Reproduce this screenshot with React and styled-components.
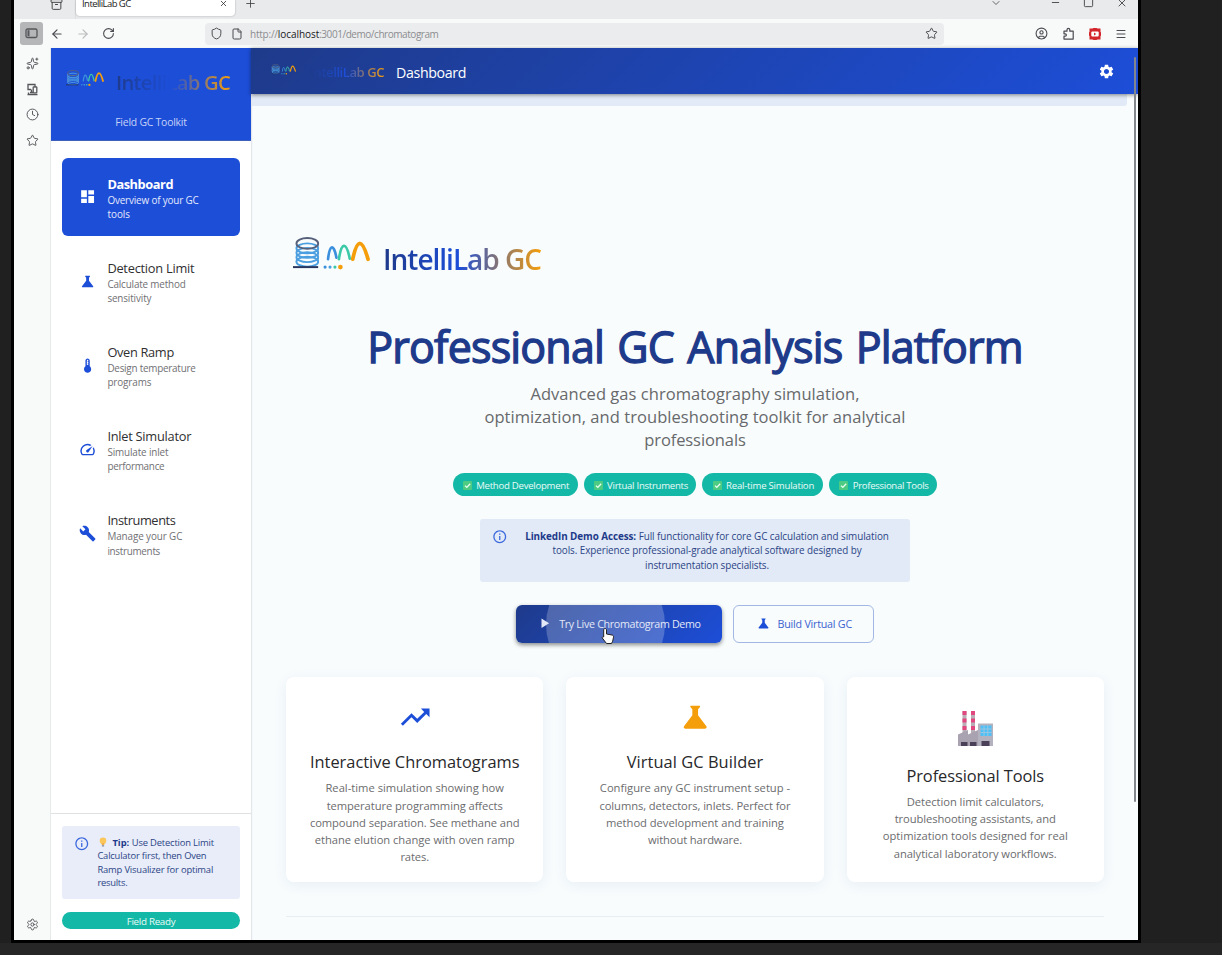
import React from "react";
import styled, { createGlobalStyle, css } from "styled-components";
import {
  MdDashboard, MdScience, MdThermostat, MdSpeed, MdBuild, MdTrendingUp,
  MdSettings, MdInfoOutline, MdPlayArrow,
} from "react-icons/md";
import {
  ArrowLeft, ArrowRight, RotateCw, Shield, File, Star, Plus, X, Minus, Square,
  ChevronDown, Menu, Clock, Settings, Sparkles, Archive, CircleUser,
} from "lucide-react";

const Global = createGlobalStyle`
  * { box-sizing: border-box; }
  html, body { margin: 0; background: #262626; }
  body { font-family: "Open Sans", "Noto Sans", sans-serif; overflow: hidden; }
  svg { display: block; flex: none; }
`;

/* ---- browser window ---- */
const Desktop = styled.div`
  width: 1222px; height: 955px; overflow: hidden; background: #262626;
`;
const Backdrop = styled.div`
  height: 943px; background: #202020; padding-left: 11px;
`;
const Frame = styled.div`
  width: 1130px; height: 943px; background: #000; padding: 0 3px 3px;
`;
const Window = styled.div`
  width: 1124px; height: 940px; overflow: hidden; background: #f8faf9;
  display: flex; flex-direction: column;
`;
const TabStrip = styled.div`
  height: 19px; flex: none; background: #e8eaeb; display: flex; align-items: flex-start;
  color: #444; padding-left: 36px;
`;
const TabTools = styled.div`
  width: 26px; height: 19px; border-right: 1px solid #dcdedf; overflow: hidden;
  & > svg { margin-top: -2px; }
`;
const Tab = styled.div`
  width: 159px; height: 16px; background: #fff; border-radius: 0 0 4px 4px;
  box-shadow: 0 0 2px rgba(0,0,0,.3); color: #222; font-size: 9.5px; line-height: 8px;
  display: flex; justify-content: space-between; padding: 0 7px 0 6px;
  & > svg { margin-top: -1px; }
`;
const NewTab = styled.div`margin: -3px 0 0 9px;`;
const WindowButtons = styled.div`
  margin-left: auto; display: flex; gap: 22px; padding-right: 10px; align-items: flex-start;
  & > svg { margin-top: -3px; }
  & > svg:first-child { margin-right: 26px; }
`;
const Toolbar = styled.div`
  height: 29px; flex: none; display: flex; align-items: center; color: #4a4a50; padding-left: 6px;
`;
const SideToggle = styled.div`
  width: 23px; height: 23px; border-radius: 3px; background: #b4b6b7;
  display: grid; place-items: center; margin-right: 7px;
`;
const NavIcons = styled.div`
  display: flex; gap: 12px; width: 155px;
  & > svg:nth-child(2) { color: #b9bbbd; }
`;
const UrlBar = styled.div`
  width: 739px; height: 22px; border-radius: 4px; background: #ebeced; display: flex; align-items: center;
  padding: 0 6px 0 5px; gap: 7.5px; font-size: 10px; color: #8b8c90;
  b { font-weight: 400; color: #18181b; }
  & > svg { color: #4a4a50; }
  & > svg:last-child { margin-left: auto; }
`;
const UrlText = styled.div`padding-top: 1px; white-space: nowrap;`;
const Extensions = styled.div`margin-left: auto; display: flex; gap: 14px; align-items: center; padding-right: 11px;`;

const Body = styled.div`flex: 1; display: flex; min-height: 0;`;
const Rail = styled.div`
  width: 37px; display: flex; flex-direction: column; align-items: center; gap: 12.6px;
  padding: 9px 0; color: #55565a; border-right: 1px solid #e6e9ea;
  & > svg:last-child { margin-top: auto; }
`;

/* ---- app drawer ---- */
const Drawer = styled.aside`
  width: 200px; flex: none; background: #fff; display: flex; flex-direction: column;
  box-shadow: 1px 0 1px #e3e7ea; z-index: 1;
`;
const DrawerHead = styled.div`
  height: 93px; background: #1d4ed8; border-bottom: 1px solid #3e60bb; text-align: center;
  padding: 20px 0 0 15px;
`;
const Toolkit = styled.div`
  font-size: 10.4px; line-height: 14px; color: #c6d3f7; margin: 9px 0 0 -15px;
`;
const Nav = styled.nav`padding: 17px 11px 0; display: flex; flex-direction: column; gap: 6.2px; flex: 1;`;
const NavItem = styled.div`
  height: 78px; border-radius: 6px; display: flex; align-items: center; padding-left: 17px; gap: 11.2px;
  color: ${(p) => (p.$active ? "#fff" : "#1d4ed8")};
  background: ${(p) => (p.$active ? "#1d4ed8" : "transparent")};
`;
const NavLabel = styled.div`padding-top: 1.6px;`;
const NavTitle = styled.div`
  font-size: 12.8px; line-height: 18px; color: ${(p) => (p.$active ? "#fff" : "#2f2f31")};
  font-weight: ${(p) => (p.$active ? 700 : 400)};
`;
const NavSub = styled.div`font-size: 9.9px; line-height: 14.2px; color: ${(p) => (p.$active ? "#e4eafb" : "#707073")};`;
const DrawerFoot = styled.div`border-top: 1px solid #dfe2e4; padding: 11.5px 11px 0; height: 127px;`;
const Tip = styled.div`
  height: 73.5px; background: #e8edf9; border-radius: 3px; padding: 10.5px 11.5px; display: flex; gap: 8.4px;
  font-size: 9.4px; line-height: 13.3px; color: #2c4486;
  b { color: #1e3a8a; }
`;
const InfoMark = styled.div`color: #3c68de;`;
const TipLine = styled.div`display: flex; align-items: center; gap: 2.5px; height: 13.3px;`;
const Ready = styled.div`
  height: 17.5px; border-radius: 9px; background: #14b8a6; margin-top: 12.5px; color: #e9fbf8;
  font-size: 9.8px; line-height: 19.5px; text-align: center;
`;

/* ---- app main area ---- */
const Main = styled.main`
  flex: 1; background: #f8fcfd; display: flex; flex-direction: column; min-width: 0; position: relative;
`;
const AppBar = styled.header`
  height: 46px; flex: none; background: linear-gradient(135deg, #1e3a8a 0%, #1d4ed8 100%);
  box-shadow: 0 1px 4px rgba(0,0,0,.45); display: flex; align-items: center; padding: 0 23px 0 20px; color: #fff;
  z-index: 1;
`;
const PageName = styled.div`font-size: 14.2px; margin-left: 12px; flex: 1; padding-top: 2px;`;
const Strip = styled.div`height: 12px; flex: none; margin-right: 11px; background: #e1eaf6; border-radius: 0 0 3px 0;`;
const Scrollbar = styled.div`
  position: absolute; right: 2px; top: 9px; width: 2px; height: 745px; background: #82868d;
  z-index: 2; border-radius: 1px;
`;
const Content = styled.div`padding: 131px 34px 0 35px; display: flex; flex-direction: column; align-items: center;`;
const HeroLogo = styled.div`align-self: flex-start; padding-left: 7px;`;

const LogoRow = styled.div`
  display: flex; align-items: flex-start; height: ${(p) => p.$h}px;
  & > svg { margin-top: ${(p) => p.$drop}px; }
`;
const LogoText = styled.div`
  font-weight: 600; white-space: nowrap; font-size: ${(p) => p.$size}px; line-height: 1.3;
  margin: ${(p) => p.$top}px 0 0 ${(p) => p.$gap}px;
  background: linear-gradient(90deg, #1e3a8a 0%, #1d4ed8 48%, #f59e0b 100%);
  -webkit-background-clip: text; background-clip: text; color: transparent;
`;
const Headline = styled.h1`
  margin: 44px 0 0; font-size: 43px; line-height: 60px; font-weight: 400; color: #1e3a8a; white-space: nowrap;
  word-spacing: 3px; -webkit-text-stroke: 1.3px #1e3a8a;
`;
const Lead = styled.div`margin-top: 5px; font-size: 16.5px; line-height: 23px; color: #67696b; text-align: center;`;
const Chips = styled.div`display: flex; gap: 6px; margin-top: 22px;`;
const Chip = styled.div`
  height: 23px; border-radius: 12px; width: ${(p) => p.$w}px; background: #14b8a6; color: #e9fbf8; font-size: 9.6px;
  display: flex; align-items: center; justify-content: center; gap: 4.5px; white-space: nowrap;
  padding: 1px 0 0 1.5px;
`;
const Notice = styled.div`
  width: 430px; height: 63px; margin-top: 22.5px; background: #e1eaf6; border-radius: 3px; display: flex;
  padding: 10px 12px; font-size: 9.9px; line-height: 14.6px; color: #2c4486; text-align: center;
  b { color: #1e3a8a; }
`;
const NoticeText = styled.div`flex: 1; padding-left: 8.5px; white-space: nowrap;`;
const Actions = styled.div`display: flex; gap: 11.5px; margin-top: 23px;`;
const Button = styled.div`
  height: 38px; width: ${(p) => p.$w}px; border-radius: 6px; font-size: 10.7px; display: flex; align-items: center;
  justify-content: center; position: relative; overflow: hidden; gap: 7px;
  ${(p) => p.$primary ? css`
    background: linear-gradient(135deg, #1e3a8a, #1d4ed8); color: #e3e8f7; padding-right: 1px;
  ` : css`
    border: 1px solid #a3b7e4; color: #3c63cf;
  `}
`;
const Lift = styled.div`border-radius: 6px; box-shadow: 0 2px 4px rgba(0,0,0,.45); position: relative;`;
const Ripple = styled.div`
  position: absolute; width: 119px; height: 119px; border-radius: 50%; left: 30px; top: -40px;
  background: rgba(255,255,255,.22);
`;
const Above = styled.div`position: relative; display: flex;`;
const Pointer = styled.svg`position: absolute; left: 85px; top: 22.5px;`;
const Cards = styled.div`
  display: grid; grid-template-columns: repeat(3, 257.4px); gap: 22.9px; margin-top: 34px; width: 818px;
`;
const Card = styled.div`
  height: 205px; background: #fff; border-radius: 8px; box-shadow: 0 3px 14px rgba(30,58,138,.07);
  display: flex; flex-direction: column; align-items: center; padding-top: 23px;
`;
const CardIcon = styled.div`color: ${(p) => p.$color}; padding-top: ${(p) => p.$drop || 0}px;`;
const CardTitle = styled.div`
  font-size: 16.4px; line-height: 24px; color: #28282a; margin: ${(p) => p.$gap}px 0 5.5px;
`;
const CardText = styled.div`font-size: 11.2px; line-height: 17.2px; color: #6b6c6e; text-align: center;`;
const Divider = styled.div`height: 1px; width: 818px; background: #e7eff3; margin-top: 34px;`;
const Row = styled.div`white-space: nowrap;`;
const Track = styled.span`white-space: nowrap; letter-spacing: ${(p) => p.$k}px;`;

const L = ({ s, k = 0 }) => <Track $k={k}>{s}</Track>;

/* ---- drawings ---- */
function Mark({ width }) {
  return (
    <svg width={width} height={width * 34 / 78} viewBox="0 0 78 34" fill="none">
      <g strokeWidth="1.9">
        <path d="M3.500 7v19M25.500 7v19" stroke="#7fa6cc" strokeWidth="1.1" />
        <ellipse cx="14.500" cy="25" rx="11" ry="5" stroke="#4b9fe0" />
        <ellipse cx="14.500" cy="20.500" rx="11" ry="5" stroke="#4b9fe0" />
        <ellipse cx="14.500" cy="16" rx="11" ry="5" stroke="#4b9fe0" />
        <ellipse cx="14.500" cy="11.500" rx="11" ry="5" stroke="#4b9fe0" />
        <ellipse cx="14.500" cy="6.500" rx="11" ry="5.500" stroke="#56607a" />
      </g>
      <path d="M0 30.500H25.500" stroke="#27375f" strokeWidth="2" />
      <path d="M35.500 22.500C37 8.500 41 5 44 21" stroke="#3b8fdc" strokeWidth="2.700" strokeLinecap="round" />
      <path d="M46.500 22.500C49 5 54 4 57.500 22" stroke="#3cc9a7" strokeWidth="2.700" strokeLinecap="round" />
      <path d="M60.500 22.500C65 1 70 1 76 22.500" stroke="#f59e0b" strokeWidth="3.800" strokeLinecap="round" />
      <circle cx="32.500" cy="30.500" r="1.600" fill="#3b8fdc" />
      <circle cx="37.500" cy="30.500" r="1.600" fill="#4b9fe0" />
      <circle cx="42.500" cy="30.500" r="1.600" fill="#3cc9a7" />
      <circle cx="48" cy="30.500" r="2.400" fill="#f59e0b" />
    </svg>
  );
}

function Logo({ mark, drop = 0, size, gap, top, h, k }) {
  return (
    <LogoRow $h={h} $drop={drop}>
      <Mark width={mark} />
      <LogoText $size={size} $gap={gap} $top={top}><L s="IntelliLab GC" k={k} /></LogoText>
    </LogoRow>
  );
}

const Check = () => (
  <svg width="9" height="9" viewBox="0 0 9 9">
    <rect width="9" height="9" rx="1" fill="#4ecb83" />
    <path d="M2 4.600l1.800 1.800L7.200 2.700" stroke="#e9fff2" strokeWidth="1.300" fill="none" />
  </svg>
);
const Bulb = () => (
  <svg width="12.500" height="11" viewBox="0 0 12.500 11">
    <circle cx="6" cy="3.800" r="3.300" fill="#fcc75a" />
    <path d="M4.500 6h3l-.4 2H4.900z" fill="#f0b04a" />
    <path d="M4.900 8h2.200v1.600H4.900z" fill="#9a9cab" />
  </svg>
);
const Factory = () => (
  <svg width="35" height="35" viewBox="0 0 35 35">
    <path d="M4.500 0h4v23h-4zM13 0h4v23h-4z" fill="#b9aeb6" />
    <path d="M4.500 0h4v4h-4zM4.500 7.500h4v4h-4zM4.500 15h4v4h-4zM13 0h4v4h-4zM13 7.500h4v4h-4zM13 15h4v4h-4z" fill="#e0487f" />
    <path d="M0 35V23.500L10 19v4.500L20 19v16z" fill="#a9a3b1" />
    <path d="M20 12.500h15V35H20z" fill="#b5b2bf" />
    <path d="M22.500 14.500h11v10.500h-11z" fill="#4fc0f5" />
    <path d="M26 14.500v10.500M29.800 14.500v10.500M22.500 18h11M22.500 21.500h11" stroke="#a9c7dc" strokeWidth=".8" />
    <path d="M3 31h6.500v4H3zM12 31h6.500v4H12zM23.500 30h8v5h-8z" fill="#4a4159" />
  </svg>
);
const SidePanel = () => (
  <svg width="13" height="11" viewBox="0 0 13 11">
    <rect x="1" y="1" width="11" height="8.500" rx="1.500" fill="none" stroke="#55565a" strokeWidth="1.300" />
    <path d="M2.500 2.200h2v6h-2z" fill="#55565a" />
  </svg>
);
const SyncedTabs = () => (
  <svg width="13" height="13" viewBox="0 0 13 13" fill="none" stroke="#55565a" strokeWidth="1.300">
    <path d="M5 6.500H2v-5h7v3" />
    <rect x="7.200" y="3.800" width="3.600" height="6" rx=".5" />
    <path d="M1.500 11.500h10M4 9.500h3M5.500 6.500v3M2.500 9.500v2" />
  </svg>
);
const Puzzle = () => (
  <svg width="13" height="13" viewBox="0 0 13 13" fill="none" stroke="#4a4a50" strokeWidth="1.200" strokeLinejoin="round">
    <path d="M2 4.200h3V2.700a1.400 1.400 0 0 1 2.800 0v1.500h3.400v7.900H2V9.200h1.200a1.200 1.200 0 0 0 0-2.400H2z" />
  </svg>
);
const RedShield = () => (
  <svg width="12" height="12" viewBox="0 0 12 12">
    <path d="M.5.500h3L4.500 0h3l1 .5h3v3.200l.5.8v3l-.5.800v3.200h-3l-1 .5h-3l-1-.5h-3V8.300L0 7.500v-3l.5-.8z" fill="#d3262c" />
    <rect x="2.300" y="3.500" width="7.400" height="5" rx="1" fill="#fff" />
    <path d="M5 4.500l2.200 1.500L5 7.500z" fill="#d3262c" />
  </svg>
);

/* ---- content; each text comes with its letter spacing ---- */
const nav = [
  { icon: MdDashboard, title: ["Dashboard", -0.44], sub: [["Overview of your GC", -0.15], ["tools", 0.02]], active: true },
  { icon: MdScience, title: ["Detection Limit", -0.24], sub: [["Calculate method", -0.16], ["sensitivity", -0.13]] },
  { icon: MdThermostat, title: ["Oven Ramp", -0.32], sub: [["Design temperature", -0.23], ["programs", -0.1]] },
  { icon: MdSpeed, title: ["Inlet Simulator", -0.25], sub: [["Simulate inlet", -0.13], ["performance", -0.26]] },
  { icon: MdBuild, title: ["Instruments", -0.43], sub: [["Manage your GC", -0.1], ["instruments", -0.29]] },
];
const chips = [
  ["Method Development", -0.26, 125.3],
  ["Virtual Instruments", -0.27, 112.5],
  ["Real-time Simulation", -0.22, 120.5],
  ["Professional Tools", -0.3, 108.7],
];
const cards = [
  {
    icon: <MdTrendingUp size={34.4} />, color: "#1d4ed8", gap: 16, title: ["Interactive Chromatograms", 0],
    text: [
      ["Real-time simulation showing how", 0], ["temperature programming affects", -0.07],
      ["compound separation. See methane and", -0.08], ["ethane elution change with oven ramp", -0.03],
      ["rates.", -0.14],
    ],
  },
  {
    icon: <MdScience size={34.4} />, color: "#f59e0b", gap: 16, title: ["Virtual GC Builder", 0.07],
    text: [
      ["Configure any GC instrument setup -", 0], ["columns, detectors, inlets. Perfect for", -0.08],
      ["method development and training", -0.03], ["without hardware.", -0.12],
    ],
  },
  {
    icon: <Factory />, drop: 11, gap: 18, title: ["Professional Tools", -0.08],
    text: [
      ["Detection limit calculators,", -0.04], ["troubleshooting assistants, and", -0.08],
      ["optimization tools designed for real", 0], ["analytical laboratory workflows.", -0.07],
    ],
  },
];

export default function App() {
  return (
    <Desktop>
      <Global />
      <Backdrop><Frame><Window>
        <TabStrip>
          <TabTools><Archive size={13} strokeWidth={1.8} /></TabTools>
          <Tab><L s="IntelliLab GC" k={-0.55} /><X size={9} /></Tab>
          <NewTab><Plus size={13} strokeWidth={1.6} /></NewTab>
          <WindowButtons>
            <ChevronDown size={12} strokeWidth={1.6} />
            <Minus size={11} />
            <Square size={11} />
            <X size={12} strokeWidth={1.8} />
          </WindowButtons>
        </TabStrip>
        <Toolbar>
          <SideToggle><SidePanel /></SideToggle>
          <NavIcons><ArrowLeft size={14} /><ArrowRight size={14} /><RotateCw size={13} /></NavIcons>
          <UrlBar>
            <Shield size={13} strokeWidth={1.8} /><File size={12} />
            <UrlText>
              <L s="http://" k={-0.22} /><b><L s="localhost" k={-0.06} /></b><L s=":3001/demo/chromatogram" k={-0.45} />
            </UrlText>
            <Star size={13} strokeWidth={1.8} />
          </UrlBar>
          <Extensions>
            <CircleUser size={13} /><Puzzle /><RedShield /><Menu size={12} />
          </Extensions>
        </Toolbar>
        <Body>
          <Rail>
            <Sparkles size={13} strokeWidth={1.8} /><SyncedTabs /><Clock size={13} strokeWidth={1.8} />
            <Star size={13} strokeWidth={1.8} /><Settings size={13} strokeWidth={1.8} />
          </Rail>
          <Drawer>
            <DrawerHead>
              <Logo mark={38} drop={2} size={20.2} gap={12} top={0.5} h={38} k={-0.72} />
              <Toolkit><L s="Field GC Toolkit" k={-0.21} /></Toolkit>
            </DrawerHead>
            <Nav>
              {nav.map((n) => (
                <NavItem key={n.title[0]} $active={n.active}>
                  <n.icon size={17.2} />
                  <NavLabel>
                    <NavTitle $active={n.active}><L s={n.title[0]} k={n.title[1]} /></NavTitle>
                    {n.sub.map(([s, k]) => <NavSub key={s} $active={n.active}><L s={s} k={k} /></NavSub>)}
                  </NavLabel>
                </NavItem>
              ))}
            </Nav>
            <DrawerFoot>
              <Tip>
                <InfoMark><MdInfoOutline size={15.5} /></InfoMark>
                <div>
                  <TipLine><Bulb /><b><L s="Tip:" k={0} /></b><L s="Use Detection Limit" k={-0.17} /></TipLine>
                  <TipLine><L s="Calculator first, then Oven" k={-0.19} /></TipLine>
                  <TipLine><L s="Ramp Visualizer for optimal" k={-0.17} /></TipLine>
                  <TipLine><L s="results." k={-0.24} /></TipLine>
                </div>
              </Tip>
              <Ready><L s="Field Ready" k={-0.3} /></Ready>
            </DrawerFoot>
          </Drawer>
          <Main>
            <AppBar>
              <Logo mark={25} drop={1.5} size={13} gap={14} top={1} h={17} k={-0.42} />
              <PageName><L s="Dashboard" k={-0.35} /></PageName>
              <MdSettings size={17} />
            </AppBar>
            <Strip />
            <Scrollbar />
            <Content>
              <HeroLogo><Logo mark={77} size={28} gap={13} top={4} h={36} k={-1.01} /></HeroLogo>
              <Headline><L s="Professional GC Analysis Platform" k={-0.83} /></Headline>
              <Lead>
                <Row><L s="Advanced gas chromatography simulation," k={0.04} /></Row>
                <Row><L s="optimization, and troubleshooting toolkit for analytical" k={0.06} /></Row>
                <Row><L s="professionals" k={-0.09} /></Row>
              </Lead>
              <Chips>{chips.map(([s, k, w]) => <Chip key={s} $w={w}><Check /><L s={s} k={k} /></Chip>)}</Chips>
              <Notice>
                <InfoMark><MdInfoOutline size={15.5} /></InfoMark>
                <NoticeText>
                  <Row><b><L s="LinkedIn Demo Access:" k={-0.08} /></b> <L s="Full functionality for core GC calculation and simulation" k={-0.06} /></Row>
                  <Row><L s="tools. Experience professional-grade analytical software designed by" k={-0.07} /></Row>
                  <Row><L s="instrumentation specialists." k={-0.1} /></Row>
                </NoticeText>
              </Notice>
              <Actions>
                <Lift>
                  <Button $primary $w={206}>
                    <Ripple />
                    <Above><MdPlayArrow size={16.5} /></Above>
                    <Above><L s="Try Live Chromatogram Demo" k={-0.32} /></Above>
                  </Button>
                  <Pointer width="14" height="18" viewBox="0 0 14 18">
                    <path d="M4 1.500c1 0 1.500.7 1.500 1.500v4l5.500 1c1.200.3 1.700 1 1.500 2.200l-.8 4-1.200 2.300H5.500L1.300 11c-.5-.9.7-1.600 1.400-1V3C2.700 2 3.200 1.500 4 1.500z" fill="#fff" stroke="#222" strokeWidth="1" />
                  </Pointer>
                </Lift>
                <Button $w={141}><MdScience size={15} color="#1d4ed8" /><L s="Build Virtual GC" k={-0.22} /></Button>
              </Actions>
              <Cards>
                {cards.map((c) => (
                  <Card key={c.title[0]}>
                    <CardIcon $color={c.color} $drop={c.drop}>{c.icon}</CardIcon>
                    <CardTitle $gap={c.gap}><L s={c.title[0]} k={c.title[1]} /></CardTitle>
                    <CardText>{c.text.map(([s, k]) => <Row key={s}><L s={s} k={k} /></Row>)}</CardText>
                  </Card>
                ))}
              </Cards>
              <Divider />
            </Content>
          </Main>
        </Body>
      </Window></Frame></Backdrop>
    </Desktop>
  );
}
